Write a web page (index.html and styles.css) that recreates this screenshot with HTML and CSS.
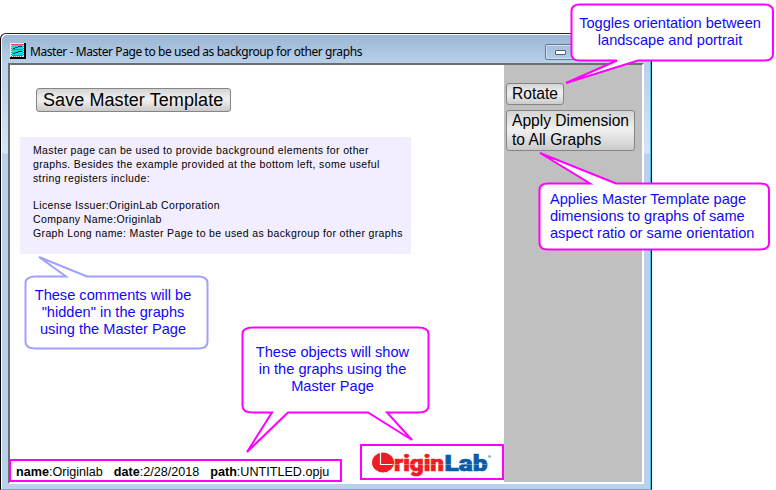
FILE: index.html
```html
<!DOCTYPE html>
<html lang="en">
<head>
<meta charset="utf-8">
<title>Master Page</title>
<link rel="stylesheet" href="styles.css">
</head>
<body>
<main class="stage">
  <section class="window">
    <header class="titlebar">
      <svg class="app-icon" width="16" height="16" viewBox="0 0 16 16" shape-rendering="crispEdges">
        <path d="M0 0h16v16H0z" fill="#000"/>
        <path d="M0 0h14v14H0z" fill="#f4e6e6"/>
        <path d="M2 1h11v11H2z" fill="#18dcdc"/>
        <path d="M2 1.500h11M2 6.500h11M2 12.500h11" stroke="#f04848" fill="none"/>
        <path d="M1.500 1v13M1 13.500h12M13.500 1v12" stroke="#b46060" stroke-dasharray="1 1" fill="none"/>
        <path d="M3 5.500h2M5 4.500h3M8 3.500h4M3 10.500h2M5 9.500h3M8 8.500h4" stroke="#103060" fill="none"/>
      </svg>
      <span class="title">Master - Master Page to be used as backgroup for other graphs</span>
      <span class="minimize"><i></i></span>
    </header>
    <div class="client">
      <div class="page">
        <button class="btn save">Save Master Template</button>
        <div class="notes">
          <p>Master page can be used to provide background elements for other</p>
          <p>graphs. Besides the example provided at the bottom left, some useful</p>
          <p>string registers include:</p>
          <p>&nbsp;</p>
          <p>License Issuer:OriginLab Corporation</p>
          <p>Company Name:Originlab</p>
          <p>Graph Long name: Master Page to be used as backgroup for other graphs</p>
        </div>
        <footer class="page-footer">
          <div class="info">
            <span><b>name</b>:Originlab</span>
            <span><b>date</b>:2/28/2018</span>
            <span><b>path</b>:UNTITLED.opju</span>
          </div>
          <div class="logo">
            <svg width="140" height="32" viewBox="0 0 140 32">
              <ellipse cx="21" cy="16.500" rx="11" ry="10" fill="#ee1c25"/>
              <path d="M18.500 7v11.500h12" stroke="#fff" stroke-width="1.200" fill="none"/>
              <text class="lg red" x="32" y="25" textLength="50" lengthAdjust="spacingAndGlyphs">rigin</text>
              <text class="lg blue" x="82.500" y="25" textLength="43" lengthAdjust="spacingAndGlyphs">Lab</text>
              <path d="M31 18.500h94" stroke="#fff" stroke-width=".6" opacity=".5"/>
              <circle cx="127.500" cy="10.500" r="1.500" fill="#8ab4d8"/>
            </svg>
          </div>
        </footer>
      </div>
      <aside class="tools">
        <button class="btn rotate">Rotate</button>
        <button class="btn apply">Apply Dimension<br>to All Graphs</button>
      </aside>
    </div>
  </section>

  <svg class="bubbles" width="776" height="490" viewBox="0 0 776 490">
    <path d="M580 4.500H764Q773 4.500 773 11V54Q773 60.500 764 60.500H638L566 83L617 60.500H580Q571.500 60.500 571.500 54V11Q571.500 4.500 580 4.500Z"/>
    <path d="M548 183.500H590L540 153L616 183.500H760Q769 183.500 769 190V243Q769 249.500 760 249.500H548Q539.500 249.500 539.500 243V190Q539.500 183.500 548 183.500Z"/>
    <path class="lilac" d="M36 276.500H66L39 257L87 276.500H198Q207.500 276.500 207.500 283V342Q207.500 348.500 198 348.500H36Q25.500 348.500 25.500 342V283Q25.500 276.500 36 276.500Z"/>
    <path d="M253 327.500H418Q428.500 327.500 428.500 334V406Q428.500 412.500 418 412.500H387L412 440L368 412.500H288L247 452L272 412.500H253Q242.500 412.500 242.500 406V334Q242.500 327.500 253 327.500Z"/>
  </svg>
  <div class="callout c1">Toggles orientation between<br>landscape and portrait</div>
  <div class="callout c2">Applies Master Template page<br>dimensions to graphs of same<br>aspect ratio or same orientation</div>
  <div class="callout c3">These comments will be<br>"hidden" in the graphs<br>using the Master Page</div>
  <div class="callout c4">These objects will show<br>in the graphs using the<br>Master Page</div>
</main>
</body>
</html>
```
FILE: styles.css
```css
* { box-sizing: border-box; }
body { margin: 0; background: #fff; font-family: "Liberation Sans", Arial, sans-serif; color: #000; }
.stage { position: relative; width: 776px; height: 490px; overflow: hidden; padding-top: 33px; }
.window {
  width: 652px; height: 457px; padding: 0 7px 0 7px;
  border: 1px solid #000; border-top-color: #222; border-bottom: 1px solid #38c4e0;
  border-radius: 6px 6px 0 0;
  background: linear-gradient(#9ab5d3, #b9d1ea 30px, #d5e5f6 119px, #b9d1ea 120px);
  box-shadow: inset 1px 1px #fff, inset -1px 0 #38c4e0;
}
.titlebar { display: flex; align-items: flex-start; height: 29px; padding: 9px 0 0 2px; }
.title { margin: 2px 0 0 4px; font: 12px/14px "Noto Sans", sans-serif; letter-spacing: -.42px; white-space: nowrap; }
.minimize { display: grid; place-items: center start; width: 80px; height: 16px; margin: 1px 18px 0 auto; padding-left: 9px; border: 1px solid #64788f; border-radius: 2px; box-shadow: inset 0 0 0 1px #cfe0f2; transform: translateX(-1px); }
.minimize i { width: 11px; height: 5px; border: 1px solid #555d66; border-radius: 1px; background: #fff; }
.client { display: flex; width: 636px; height: 421px; border: 2px solid #6d6d6d; border-right-color: #fff; border-bottom-color: #fff; }
.page { display: flex; flex-direction: column; width: 494px; background: #fff; }
.tools { display: flex; flex-direction: column; align-items: flex-start; flex: 1; background: #c0c0c0; padding: 18px 0 0 2px; gap: 5px; }
.btn {
  padding: 0 6px 1px; border: 1px solid #858585; border-radius: 3px; text-align: left; white-space: nowrap;
  font: 15.6px/19px "Liberation Sans", Arial, sans-serif; color: #000;
  background: linear-gradient(#d4d4d4, #f0f0f0 45%, #ececec 55%, #cacaca);
}
.save { width: 195px; height: 24px; margin: 23px 0 0 26px; padding-bottom: 0; font-size: 18px; letter-spacing: .08px; }
.rotate { width: 58px; height: 22px; padding-left: 5px; }
.apply { width: 129px; height: 41px; padding-left: 5px; }
.notes { width: 391px; height: 117px; margin: 25px 0 0 10px; padding: 7px 0 0 13px; background: #f2eeff; font-size: 10.5px; line-height: 13.8px; letter-spacing: .36px; white-space: nowrap; }
.notes p { margin: 0; }
.page-footer { display: flex; align-items: flex-end; justify-content: space-between; margin-top: auto; }
.info { display: flex; gap: 11px; width: 333px; height: 23px; margin-left: -1px; padding: 4px 5px 0; border: 2px solid #f0f; font-size: 12.6px; line-height: 14px; white-space: nowrap; }
.logo { width: 144px; height: 36px; border: 2px solid #f0f; margin-bottom: 2px; }
.logo svg { display: block; }
.lg { font: 900 22px Roboto, sans-serif; stroke-width: .7; }
.red { fill: #ee1c25; stroke: #ee1c25; }
.blue { fill: #0a5ba8; stroke: #0a5ba8; }
.bubbles { position: absolute; left: 0; top: 0; fill: #fff; stroke: #f0f; stroke-width: 2; }
.lilac { stroke: #a0a0ff; }
.callout { position: absolute; color: #1008fa; font-size: 14.6px; line-height: 17px; text-align: center; white-space: nowrap; }
.c1 { left: 572px; top: 15px; width: 196px; }
.c2 { left: 550px; top: 191px; text-align: left; }
.c3 { left: 24px; top: 287px; width: 178px; }
.c4 { left: 243px; top: 344px; width: 179px; }
```
